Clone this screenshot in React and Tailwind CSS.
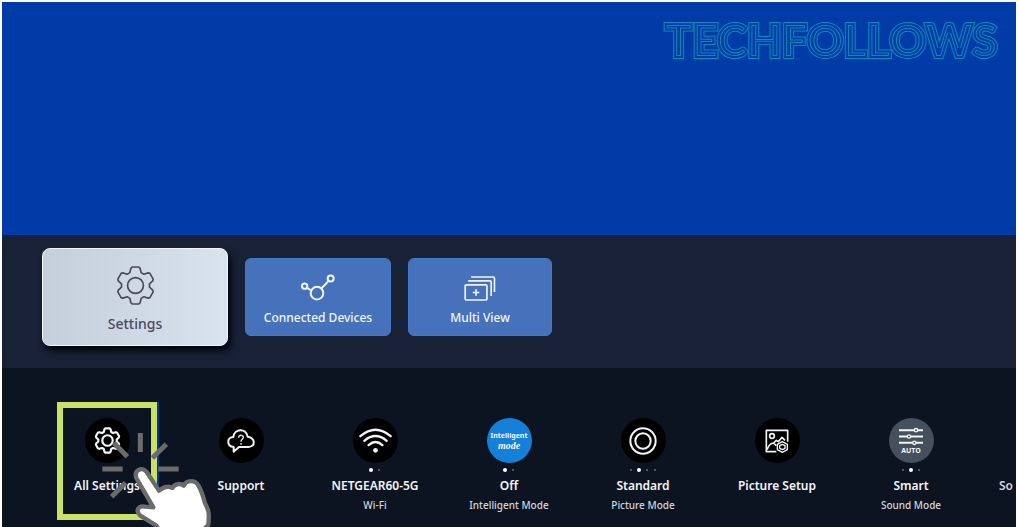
import clsx from 'clsx';

const tooth = [[-17, -39], [-14, -52], [-10, -56], [10, -56], [14, -52], [17, -39]];

const gearPath = () => {
  const points = [];
  for (let i = 0; i < 6; i++) {
    const a = (i * Math.PI) / 3;
    tooth.forEach(([x, y]) => {
      const px = x * Math.cos(a) - y * Math.sin(a);
      const py = x * Math.sin(a) + y * Math.cos(a);
      points.push(`${px.toFixed(1)} ${py.toFixed(1)}`);
    });
  }
  return `M${points.join('L')}Z`;
};

const GearIcon = ({ className, strokeWidth }) => (
  <svg viewBox="-62 -62 124 124" className={className} fill="none" stroke="currentColor" strokeWidth={strokeWidth} strokeLinejoin="round">
    <path d={gearPath()} />
    <circle r="24" />
  </svg>
);

const ConnectedIcon = () => (
  <svg viewBox="0 0 102 80" className="h-[27px] w-[34px]" fill="none" stroke="currentColor" strokeWidth="6">
    <circle cx="48" cy="57" r="19" />
    <circle cx="11" cy="36" r="8" />
    <circle cx="89" cy="13" r="9" />
    <path d="M18 41l13 8M61 43l22-23" />
  </svg>
);

const MultiViewIcon = () => (
  <svg viewBox="0 0 96 76" className="h-[25px] w-8" fill="none" stroke="currentColor" strokeWidth="5" strokeLinejoin="round">
    <rect x="3" y="27" width="66" height="46" rx="3" />
    <path d="M12 15h66a4 4 0 0 1 4 4v42M21 3h67a4 4 0 0 1 4 4v42M36 40v20M26 50h20" />
  </svg>
);

const SupportIcon = () => (
  <svg viewBox="0 0 84 72" className="h-6 w-7" fill="none" stroke="currentColor" strokeWidth="6" strokeLinejoin="round">
    <path d="M20 68V54C-2 52-1 24 19 24C22-3 58-3 62 23C85 27 87 52 64 54H36Z" />
    <path d="M35 26C35 16 50 17 49 26C48 32 42 30 42 38M42 42v5" strokeWidth="4" />
  </svg>
);

const WifiIcon = () => (
  <svg viewBox="0 0 100 76" className="h-[25px] w-[33px]" fill="none" stroke="currentColor" strokeWidth="7" strokeLinecap="round">
    <path d="M4 25Q50-14 96 25M16 39Q50 10 84 39M29 52Q50 33 71 52" />
    <circle cx="50" cy="68" r="7" fill="currentColor" stroke="none" />
  </svg>
);

const StandardIcon = () => (
  <svg viewBox="0 0 84 84" className="size-7" fill="none" stroke="currentColor" strokeWidth="6">
    <circle cx="42" cy="42" r="38" />
    <circle cx="42" cy="42" r="23" />
  </svg>
);

const PictureIcon = () => (
  <svg viewBox="0 0 72 72" className="size-6" fill="none" stroke="currentColor" strokeWidth="5" strokeLinejoin="round">
    <path d="M34 68H4V4H68V38" />
    <circle cx="21" cy="21" r="7" />
    <path d="M6 62Q14 42 25 42L34 50M26 42L34 34L40 38L51 25L60 34" />
    <path d="M52 38l15 8v16l-15 8l-15-8V46Z" strokeWidth="4" />
    <path d="M52 46l8 4v8l-8 4l-8-4v-8Z" strokeWidth="4" />
  </svg>
);

const SoundIcon = () => (
  <svg viewBox="0 0 72 56" className="h-[19px] w-6" fill="none" stroke="currentColor" strokeWidth="6">
    <path d="M0 9h72M0 28h72M0 47h72" />
    <g fill="#464f5c" strokeWidth="4">
      <circle cx="51" cy="9" r="5" />
      <circle cx="30" cy="28" r="5" />
      <circle cx="46" cy="47" r="5" />
    </g>
  </svg>
);

// one stripe just outside the letters, a second one clipped to their inside
const Logo = () => (
  <svg viewBox="0 0 344 44" className="h-11 w-[344px]" role="img" aria-label="TECHFOLLOWS">
    <defs>
      <text id="logo-word" x="3" y="37" fontSize="45" fontWeight="900" fontFamily="Lato, sans-serif">TECHFOLLOWS</text>
      <clipPath id="logo-clip">
        <use href="#logo-word" />
      </clipPath>
    </defs>
    <use href="#logo-word" fill="none" stroke="#068fb6" strokeWidth="4" />
    <use href="#logo-word" fill="#003ba8" stroke="#003ba8" strokeWidth="2" />
    <g clipPath="url(#logo-clip)">
      <use href="#logo-word" fill="#003ba8" stroke="#068fb6" strokeWidth="4" />
      <use href="#logo-word" fill="none" stroke="#003ba8" strokeWidth="2" />
    </g>
  </svg>
);

const TapPointer = () => (
  <svg viewBox="0 0 540 411" className="pointer-events-none absolute top-[22px] left-[43px] h-[137px] w-[180px]" aria-hidden="true">
    <path
      d="M206 158L247 200M286 129V186M364 163L322 204M172 237H233M340 237H401M242 278L200 320"
      stroke="#6b6b6b"
      strokeWidth="15"
    />
    <path
      d="M274 264C266 241 291 228 305 246L342 302C356 291 370 286 382 294C390 280 408 279 416 287C425 269 450 269 460 286C469 301 475 321 480 340C492 362 493 370 490 404L470 425H345L334 407L286 377C270 363 280 345 300 350L325 352Z"
      fill="#fff"
      stroke="#6b6b6b"
      strokeWidth="13"
      strokeLinejoin="round"
    />
  </svg>
);

const shortcuts = [
  { title: 'All Settings', icon: <GearIcon className="size-[27px]" strokeWidth="10" /> },
  { title: 'Support', icon: <SupportIcon /> },
  { title: 'NETGEAR60-5G', sub: 'Wi-Fi', dots: 2, active: 0, icon: <WifiIcon /> },
  {
    title: 'Off',
    sub: 'Intelligent Mode',
    dots: 2,
    active: 0,
    color: 'bg-[#1580d8]',
    icon: (
      <span className="flex flex-col items-center leading-[10px]">
        <span className="text-[7px] font-bold">Intelligent</span>
        <span className="font-['Liberation_Serif',serif] text-[10px] font-bold italic">mode</span>
      </span>
    ),
  },
  { title: 'Standard', sub: 'Picture Mode', dots: 4, active: 1, icon: <StandardIcon /> },
  { title: 'Picture Setup', icon: <PictureIcon /> },
  {
    title: 'Smart',
    sub: 'Sound Mode',
    dots: 3,
    active: 1,
    color: 'bg-[#464f5c]',
    icon: (
      <span className="flex flex-col items-center">
        <SoundIcon />
        <span className="text-[7px] leading-[9px] font-bold">AUTO</span>
      </span>
    ),
  },
];

const Shortcut = ({ item }) => (
  <button type="button" className="flex w-[134px] shrink-0 flex-col items-center text-gray-100">
    <span className={clsx('flex size-[45px] items-center justify-center rounded-full', item.color || 'bg-black')}>
      {item.icon}
    </span>
    <span className="flex h-[14px] items-center gap-1">
      {Array.from({ length: item.dots || 0 }, (_, i) => (
        <span key={i} className="flex size-1 items-center justify-center">
          <span className={clsx('rounded-full', i === item.active ? 'size-1 bg-white' : 'size-[2px] bg-gray-500')} />
        </span>
      ))}
    </span>
    <span className="text-[12px] leading-[18px] font-semibold">{item.title}</span>
    {item.sub && <span className="text-[10px] leading-[20px] font-medium text-gray-300">{item.sub}</span>}
  </button>
);

const App = () => {
  return (
    <main className="min-h-screen bg-white pt-[2px] pr-[3px] pl-[2px] font-['Noto_Sans',sans-serif]">
      <div className="flex min-h-[calc(100vh-2px)] flex-col overflow-hidden">
        <header className="flex flex-1 items-start justify-end bg-[#003ba8] pt-[18px] pr-[10px]">
          <Logo />
        </header>

        <nav className="flex items-center bg-[#182135] pt-[13px] pb-[22px] pl-10">
          <button
            type="button"
            className="flex h-[98px] w-[186px] flex-col items-center justify-center gap-2 rounded-lg border border-slate-100 bg-linear-to-r from-[#c5cfdb] to-[#d8e3ee] pt-1 text-[#4a4a5c] shadow-[3px_5px_6px_#02050c]"
          >
            <GearIcon className="size-[41px]" strokeWidth="5" />
            <span className="text-[14px] leading-[20px] font-medium">Settings</span>
          </button>
          <button
            type="button"
            className="ml-[17px] flex h-[78px] w-[146px] flex-col items-center justify-end gap-2 rounded-md border border-[#4379ca] bg-[#4672bb] pb-2 text-gray-100"
          >
            <ConnectedIcon />
            <span className="text-[12px] leading-[18px] font-medium">Connected Devices</span>
          </button>
          <button
            type="button"
            className="ml-[17px] flex h-[78px] w-[144px] flex-col items-center justify-end gap-2 rounded-md border border-[#4379ca] bg-[#4672bb] pb-2 text-gray-100"
          >
            <MultiViewIcon />
            <span className="text-[12px] leading-[18px] font-medium">Multi View</span>
          </button>
        </nav>

        <section className="relative flex items-start overflow-hidden bg-[#0c1421] pt-[50px] pb-3 pl-[38px]">
          {shortcuts.map((item) => (
            <Shortcut key={item.title} item={item} />
          ))}
          <span className="mt-[59px] pl-[21px] text-[12px] leading-[18px] font-semibold text-gray-300">So</span>

          <div className="pointer-events-none absolute top-[34px] left-[55px] h-[118px] w-[100px] border-[6px] border-[#c9e265] shadow-[2px_0_0_#003a9e]" />
          <TapPointer />
        </section>
      </div>
    </main>
  );
};

export default App;
